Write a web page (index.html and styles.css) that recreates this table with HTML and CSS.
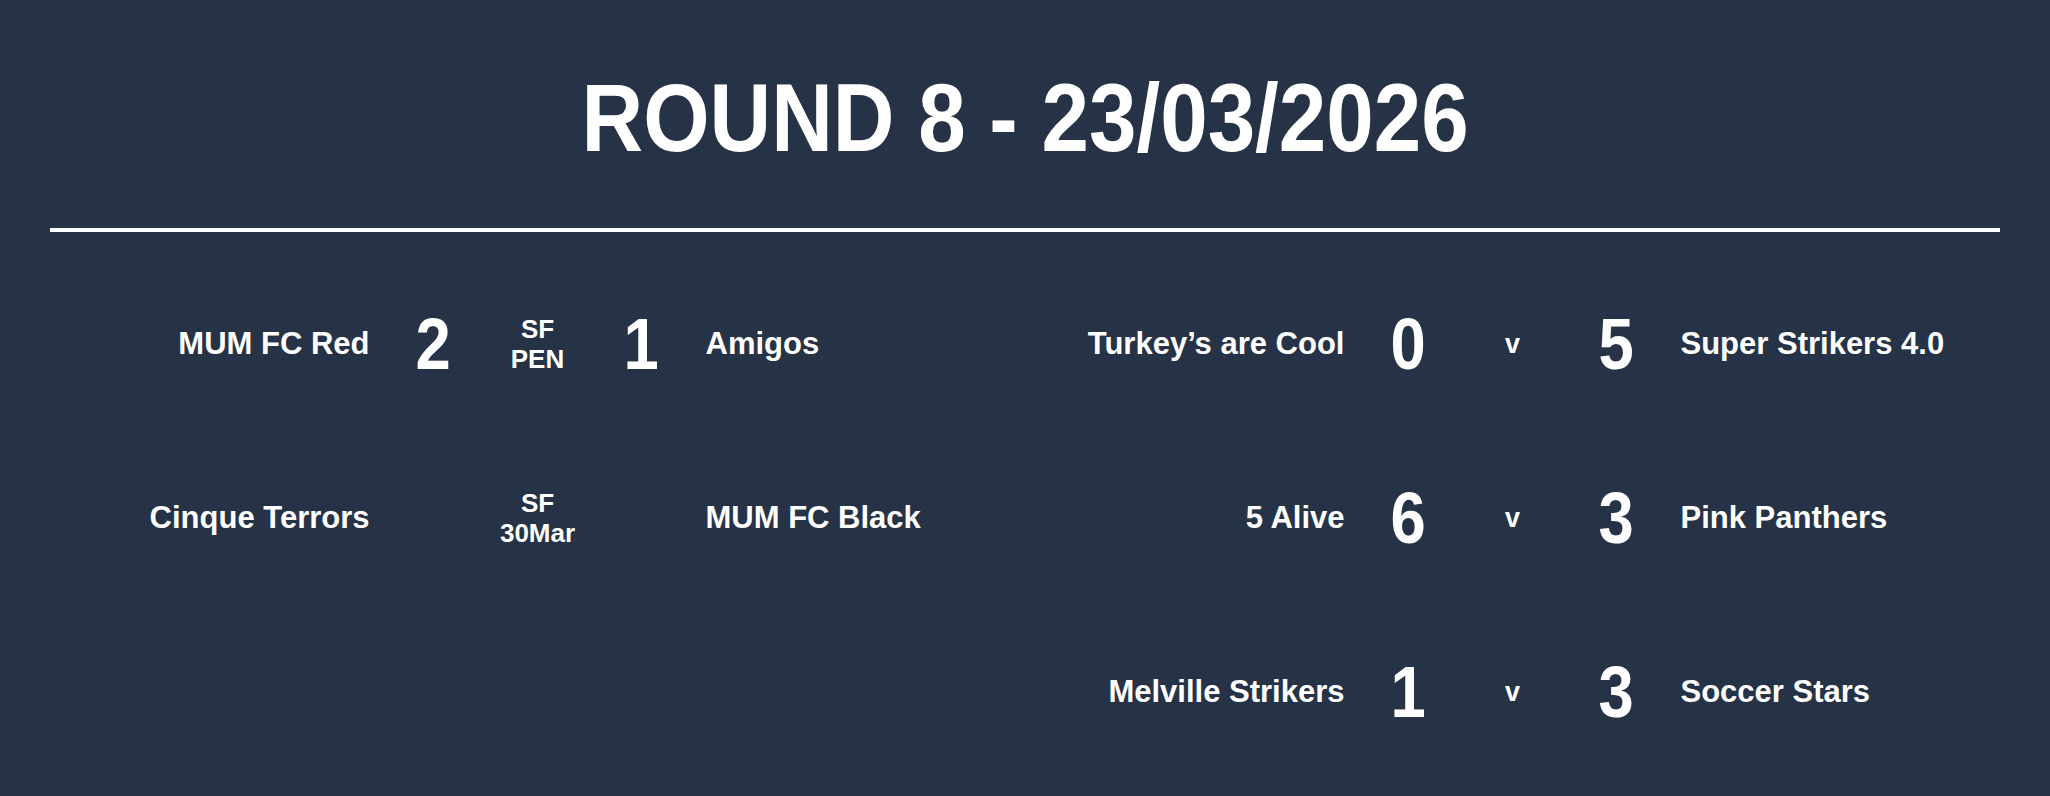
FILE: index.html
```html
<!DOCTYPE html>
<html lang="en">
<head>
<meta charset="utf-8">
<title>Round 8 - 23/03/2026</title>
<link rel="stylesheet" href="styles.css">
</head>
<body>
<main class="page">
  <header class="header">
    <h1 class="title">ROUND 8 - 23/03/2026</h1>
  </header>
  <hr class="rule">
  <section class="fixtures">
    <div class="column">
      <div class="match">
        <div class="team team-home">MUM FC Red</div>
        <div class="score"><span class="digits">2</span></div>
        <div class="mid">SF<br>PEN</div>
        <div class="score"><span class="digits">1</span></div>
        <div class="team team-away">Amigos</div>
      </div>
      <div class="match">
        <div class="team team-home">Cinque Terrors</div>
        <div class="score"></div>
        <div class="mid">SF<br>30Mar</div>
        <div class="score"></div>
        <div class="team team-away">MUM FC Black</div>
      </div>
    </div>
    <div class="column">
      <div class="match">
        <div class="team team-home">Turkey’s are Cool</div>
        <div class="score"><span class="digits">0</span></div>
        <div class="mid mid-v">v</div>
        <div class="score"><span class="digits">5</span></div>
        <div class="team team-away">Super Strikers 4.0</div>
      </div>
      <div class="match">
        <div class="team team-home">5 Alive</div>
        <div class="score"><span class="digits">6</span></div>
        <div class="mid mid-v">v</div>
        <div class="score"><span class="digits">3</span></div>
        <div class="team team-away">Pink Panthers</div>
      </div>
      <div class="match">
        <div class="team team-home">Melville Strikers</div>
        <div class="score"><span class="digits">1</span></div>
        <div class="mid mid-v">v</div>
        <div class="score"><span class="digits">3</span></div>
        <div class="team team-away">Soccer Stars</div>
      </div>
    </div>
  </section>
</main>
</body>
</html>
```

FILE: styles.css
```css
html, body {
  margin: 0;
  padding: 0;
  background: #263346;
  color: #ffffff;
  font-family: "Liberation Sans", Arial, sans-serif;
  font-weight: 700;
}

.page {
  width: 2050px;
  height: 796px;
  box-sizing: border-box;
  padding: 69px 50px 0;
  overflow: hidden;
}

.header {
  display: flex;
  justify-content: center;
}

.title {
  margin: 0;
  font-family: "Liberation Sans", Arial, sans-serif;
  font-weight: 700;
  font-size: 97px;
  line-height: 98px;
  white-space: nowrap;
  transform: scaleX(0.88);
  transform-origin: center;
}

.rule {
  margin: 61px 0 0;
  border: 0;
  height: 4px;
  background: #ffffff;
}

.fixtures {
  display: grid;
  grid-template-columns: 1fr 1fr;
  padding-top: 25px;
}

.column {
  display: flex;
  flex-direction: column;
}

.match {
  height: 174px;
  display: grid;
  grid-template-columns: 1fr 80px 128px 80px 1fr;
  align-items: center;
}

.team {
  font-size: 31px;
  line-height: 36px;
  white-space: nowrap;
}

.team-home {
  text-align: right;
  padding-right: 24px;
}

.team-away {
  text-align: left;
  padding-left: 24px;
}

.score {
  font-size: 72px;
  line-height: 72px;
  text-align: center;
}

.digits {
  display: inline-block;
  transform: scaleX(0.88);
}

.mid {
  font-size: 26px;
  line-height: 30px;
  text-align: center;
}

.mid-v {
  font-size: 27px;
}
```
